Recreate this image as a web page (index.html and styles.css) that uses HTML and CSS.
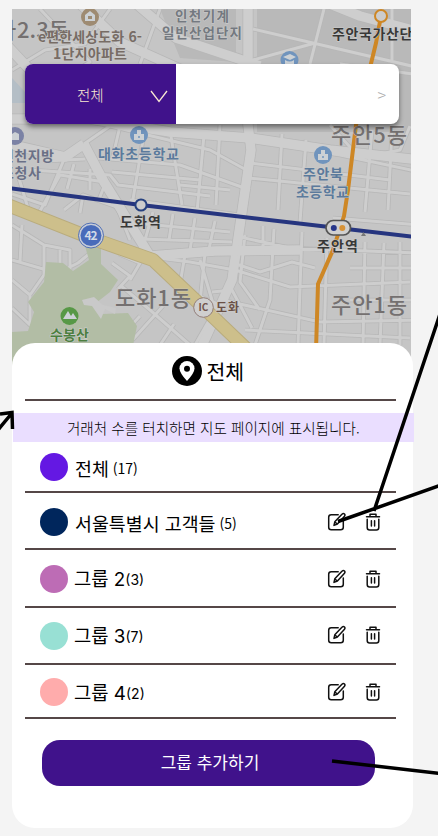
FILE: index.html
```html
<!DOCTYPE html>
<html lang="ko">
<head>
<meta charset="utf-8">
<title>전체</title>
<link rel="stylesheet" href="styles.css">
</head>
<body>
<svg class="defs" width="0" height="0" aria-hidden="true">
  <defs>
    <symbol id="edit" viewBox="0 0 20 20">
      <path d="M11.2 2.8H4.2Q1.7 2.8 1.7 5.3V15.2Q1.7 17.7 4.2 17.7H13.7Q16.3 17.7 16.3 15.2V9" />
      <path d="M7 13.4L7.8 9.8L14.9 2.3Q16.4 1 17.5 2Q18.5 3.1 17.3 4.6L10.4 12Z M8 10L10.2 12" />
    </symbol>
    <symbol id="trash" viewBox="0 0 16 20">
      <path d="M1.5 4.8H14.5M5 4.5V2.2H11V4.5M2.2 7.3V15.5Q2.2 18 4.6 18H11.4Q13.8 18 13.8 15.5V7.3M6.4 8.8V14M9.6 8.8V14" />
    </symbol>
  </defs>
</svg>
<main class="phone">
  <svg class="map" viewBox="12 9 399 360" aria-hidden="true">
    <defs>
      <g id="wide">
        <path d="M248 0V125L251 150L232 280L200 350L190 380" />
        <path d="M76 0L120 42L200 78M0 38L62 104M132 0L176 38L260 66" />
        <path d="M0 119H90L170 132L250 138L330 150L420 160" />
        <path d="M84 144L104 182L150 256M150 256L215 251L300 250M84 144L65 157L0 142" />
        <path d="M320 0L360 16L420 32" />
      </g>
      <g id="medium">
        <path d="M12 70L45 50L85 44L110 9M40 9L90 62L60 80M12 54L60 100M160 9L140 64" />
        <path d="M253 29L420 68M324 9L310 64M253 60L315 43M392 60V9M340 64L420 75" />
        <path d="M84 144L110 126L210 150L250 172M98 158L180 165L250 190M65 157L45 205L12 194M104 182L60 175L35 220" />
        <path d="M120 126L112 160M145 128L132 205M170 130L182 205M204 135L197 212M220 125L216 205M112 172L200 180M130 200L240 215" />
        <path d="M250 140L340 155L420 172M248 178L410 194M250 163L390 180M282 134L278 210M306 140L300 222M372 130L365 212M392 130L388 210M330 125L360 158L400 150L410 126" />
        <path d="M235 236L290 248L420 253M235 270L290 287L410 282M222 300L320 322L420 320M245 330L410 338M245 235L240 282L260 310M274 229L270 300L255 345M302 232L298 345M327 238L324 345M365 242L363 345M384 243L380 345M400 242V345M230 262L260 272L292 262L315 268M212 292L232 290L252 328M263 226V250M350 300H411M350 268H411M333 218L420 225" />
        <path d="M12 225L44 245V275L30 295L12 280M44 245L70 250V270M60 250V272L78 263L89 254M12 260L43 269M22 225L20 262M30 296V325L12 308M64 210L83 195L80 213M83 195L120 208" />
        <path d="M119 254L140 263L130 280M112 263L130 276L118 289M150 257L190 262L235 270M120 285L150 310L190 345M163 306L128 345M180 288L220 305M185 255L180 284M205 253L200 302M174 324L160 345M140 316L128 329M200 260L215 310L195 345" />
        <path d="M117 207L130 240M153 212L145 240M173 214L169 240M195 218L190 250M215 221L209 249M145 224L230 232M140 239L232 242" />
        <path d="M18 175L30 215M30 170L110 175L118 185L210 196M46 161L85 159M74 164L67 189M90 169V190M105 184L98 202M180 185L230 190" />
      </g>
    </defs>
    <rect class="land" x="12" y="9" width="399" height="360" />
    <path class="dark-block" d="M160 9H236V62L180 58ZM257 9H411V132H257Z" />
    <path class="water" d="M12 78L25 92L34 103H12Z" />
    <g class="casing"><use class="w-medium" href="#medium"/><use class="w-wide" href="#wide"/></g>
    <g class="road"><use class="w-medium" href="#medium"/><use class="w-wide" href="#wide"/></g>
    <path class="park" d="M85 246L101 248V264L118 280L110 292L96 303L102 314L128 313L137 326L132 350L110 369H12V332L28 331L34 312L28 302L44 282L46 262L63 263L73 271L89 260Z" />
    <path class="park-path" d="M115 314L105 309L101 319L92 306L84 305L82 300L94 297L103 305L116 308Z" />
    <path class="highway-edge" d="M5 204L96 240L153 260L209 313L255 357" />
    <path class="highway" d="M5 204L96 240L153 260L209 313L255 357" />
    <path class="metro-orange" d="M381 16L376 43L356 125L348 190L344 216L333 250L318 284L316 350" />
    <path class="metro-blue" d="M8 188L141 205L338 228L415 237" />
    <circle class="stop-blue" cx="141" cy="205" r="5.6" />
    <circle class="stop-orange" cx="381" cy="16" r="6" />
    <rect class="transfer" x="326" y="220.5" width="24.5" height="14.5" rx="7.2" />
    <circle cx="333.8" cy="228" r="3" fill="#27368a" /><circle cx="342.3" cy="228" r="3" fill="#d69238" />
    <g class="marker-brown"><circle cx="90" cy="17" r="9"/><path d="M85 20V15L90 11L95 15V21H85Z M88 16H92V19H88Z"/></g>
    <g class="marker-navy"><circle cx="15" cy="136" r="9"/><path d="M12 134L15 132L19 134V140H12Z"/></g>
    <g class="marker-blue"><circle cx="139" cy="135" r="9"/><path d="M134 140V134H137V130H141V134H144V140Z"/><circle cx="139" cy="137" r="1"/></g>
    <g class="marker-blue"><circle cx="323" cy="155" r="9"/><path d="M318 160V154H321V150H325V154H328V160Z"/><circle cx="323" cy="157" r="1"/></g>
    <g class="marker-blue"><circle cx="289.5" cy="60" r="9"/><path d="M283 57L290 54L296 57L290 60ZM285 60Q290 63 294 60V64H285Z"/></g>
    <g class="marker-green"><circle cx="69.5" cy="316" r="9"/><path d="M63 319L68 311L71 316L73 313L77 319Z"/></g>
    <circle class="route-ring" cx="91" cy="235.5" r="12.5" /><circle class="route" cx="91" cy="235.5" r="10.5" />
    <text class="route-label" x="91" y="240" textLength="13">42</text>
    <circle class="ic" cx="203.5" cy="307.5" r="9.8" /><text class="ic-label" x="203.5" y="311.3">IC</text>
    <g class="label">
      <text class="district" x="-4" y="38">가</text>
      <text class="district" x="17" y="38" textLength="52">2.3동</text>
      <text class="brown" x="38" y="41.5" textLength="104">e편한세상도화 6-</text>
      <text class="brown" x="53" y="58.5" textLength="74">1단지아파트</text>
      <text class="slate" x="175" y="21" textLength="54">인천기계</text>
      <text class="slate" x="162" y="38" textLength="80">일반산업단지</text>
      <text class="station" x="332" y="38.5" textLength="94">주안국가산단역</text>
      <text class="district" x="331" y="143" textLength="76">주안5동</text>
      <text class="school" x="98" y="159" textLength="81">대화초등학교</text>
      <text class="school" x="303" y="179" textLength="40">주안북</text>
      <text class="school" x="296" y="197" textLength="53">초등학교</text>
      <text class="office" x="1" y="161" textLength="53">인천지방</text>
      <text class="office" x="1" y="178" textLength="40">조청사</text>
      <text class="station" x="120" y="227" textLength="41">도화역</text>
      <text class="station" x="317" y="251" textLength="41">주안역</text>
      <text class="district" x="115" y="306" textLength="76">도화1동</text>
      <text class="district" x="331" y="313" textLength="76">주안1동</text>
      <text class="exit" x="216" y="312" textLength="23">도화</text>
      <text class="hill" x="50" y="340" textLength="39">수봉산</text>
    </g>
    <path d="M361 236L363.5 232L366 236Z" fill="#777" />
  </svg>

  <div class="picker">
    <button class="picker-group"><span>전체</span>
      <svg width="18" height="13" viewBox="0 0 18 13"><path d="M1 1L9 11.5L17 1"/></svg>
    </button>
    <div class="picker-value"><span>&gt;</span></div>
  </div>

  <section class="sheet">
    <header class="sheet-title">
      <svg width="30" height="30" viewBox="0 0 30 30"><circle cx="15" cy="15" r="15"/><path d="M15 25Q7.5 17 7.5 12.3A7.5 7.3 0 0 1 22.5 12.3Q22.5 17 15 25Z" fill="#fff"/><circle cx="15" cy="12.7" r="3"/></svg>
      <h1>전체</h1>
    </header>
    <p class="notice"><span>거래처 수를 터치하면 지도 페이지에 표시됩니다.</span></p>
    <ul class="groups">
      <li class="group all"><i class="dot violet"></i><b>전체</b><small>(17)</small></li>
      <li class="group seoul"><i class="dot navy"></i><b>서울특별시 고객들</b><small>(5)</small><span class="actions"><svg class="edit"><use href="#edit"/></svg><svg class="trash"><use href="#trash"/></svg></span></li>
      <li class="group numbered second"><i class="dot orchid"></i><b>그룹 2</b><small>(3)</small><span class="actions"><svg class="edit"><use href="#edit"/></svg><svg class="trash"><use href="#trash"/></svg></span></li>
      <li class="group numbered third"><i class="dot mint"></i><b>그룹 3</b><small>(7)</small><span class="actions"><svg class="edit"><use href="#edit"/></svg><svg class="trash"><use href="#trash"/></svg></span></li>
      <li class="group numbered fourth"><i class="dot pink"></i><b>그룹 4</b><small>(2)</small><span class="actions"><svg class="edit"><use href="#edit"/></svg><svg class="trash"><use href="#trash"/></svg></span></li>
    </ul>
    <button class="add">그룹 추가하기</button>
  </section>
</main>
<svg class="connectors" viewBox="0 0 438 836" aria-hidden="true">
  <path d="M440 314L374 511M440 485.5L338 521.5M332 761L440 773.5"/>
  <path d="M-3 431L12 413M0 414L12 412.5L12.5 429"/>
</svg>
</body>
</html>
```
FILE: styles.css
```css
* { box-sizing: border-box; }
body {
  position: relative;
  width: 438px;
  height: 836px;
  margin: 0;
  padding: 9px 0 0 12px;
  overflow: hidden;
  background: #f4f4f4;
  color: #000;
  font-family: "Noto Sans CJK KR", sans-serif;
}
.defs { position: absolute; }
.phone { position: relative; width: 401px; }
.map { display: block; width: 399px; height: 360px; }
.map path { stroke-linejoin: round; }
.land { fill: #c5c5c5; }
.dark-block { fill: #b9b9b9; }
.water { fill: #b4bec6; }
.casing, .road { fill: none; }
.casing { stroke: #b7b7b7; }
.road { stroke: #cecece; }
.casing .w-medium { stroke-width: 4.6px; }
.casing .w-wide { stroke-width: 11px; }
.road .w-medium { stroke-width: 3px; }
.road .w-wide { stroke-width: 9.5px; }
.park { fill: #b2bda5; }
.park-path { fill: #c9c9c9; }
.highway-edge, .highway, .metro-orange, .metro-blue { fill: none; }
.highway-edge { stroke: #b9ac7d; stroke-width: 14px; }
.highway { stroke: #cdbf8b; stroke-width: 12px; }
.metro-orange { stroke: #ce8725; stroke-width: 4px; }
.metro-blue { stroke: #26357f; stroke-width: 4px; }
.stop-blue { fill: #ccc; stroke: #26417f; stroke-width: 2px; }
.stop-orange { fill: #ccc; stroke: #ce8725; stroke-width: 2px; }
.transfer { fill: #d0d0d0; stroke: #555; stroke-width: 1.7px; }
.marker-brown { fill: #9e8b72; }
.marker-navy { fill: #7b82a5; }
.marker-blue { fill: #7094bd; }
.marker-green { fill: #579846; }
.map g[class^="marker"] path { fill: #ccd1d5; fill-rule: evenodd; }
.route-ring { fill: #c8cdd8; stroke: #5371b4; }
.route { fill: #486bba; }
.route-label, .ic-label { font-weight: 700; text-anchor: middle; }
.route-label { fill: #d2d9e6; font-size: 12px; }
.ic { fill: #cfcfcf; stroke: #927e79; }
.ic-label { fill: #71564d; font-size: 10px; }
.label { font-size: 14px; font-weight: 500; paint-order: stroke; stroke: #cbcbcb; stroke-width: 1.2px; }
.district { fill: #747070; font-size: 22px; font-weight: 500; stroke-width: 0.6px; }
.brown { fill: #776c65; font-weight: 700; }
.slate { fill: #747980; font-size: 13.5px; font-weight: 700; }
.station { fill: #383838; font-weight: 700; }
.school { fill: #5b7a9c; font-weight: 700; }
.office { fill: #6a7086; font-weight: 700; }
.exit { fill: #6b5146; font-size: 12px; font-weight: 700; }
.hill { fill: #4c7f3f; font-weight: 700; }
.picker {
  position: absolute;
  top: 55px;
  left: 13px;
  display: flex;
  width: 374px;
  height: 60px;
  border-radius: 8px;
  background: #fff;
  box-shadow: 0 3px 5px rgb(0 0 0 / 45%);
}
button { border: 0; font-family: inherit; }
.picker-group {
  display: flex;
  align-items: center;
  justify-content: space-between;
  width: 151px;
  padding: 1px 8px 0 52px;
  border-radius: 8px 0 0 8px;
  background: #40128b;
  color: #f8e9d2;
  font-size: 14.5px;
  font-weight: 300;
}
.picker-group svg { margin-top: 3px; fill: none; stroke: #f8e9d2; stroke-width: 1.3px; }
.picker-value {
  display: flex;
  flex: 1;
  align-items: center;
  justify-content: flex-end;
  padding-right: 13px;
  color: #aaa;
  font-size: 16px;
  font-weight: 300;
}
.sheet {
  position: relative;
  display: flex;
  flex-direction: column;
  width: 400.5px;
  height: 485px;
  margin-top: -26px;
  border-radius: 23px;
  background: #fff;
}
.sheet-title {
  display: flex;
  align-items: center;
  justify-content: center;
  gap: 4px;
  height: 58px;
  margin: 0 17px 0 13px;
  padding-right: 4px;
  padding-bottom: 1px;
  border-bottom: 2px solid #554747;
}
h1 { margin: 0; font-size: 20.5px; font-weight: 400; line-height: 30px; }
.notice {
  height: 29px;
  margin: 12px -1px 0 1px;
  background: #eadeff;
  font-size: 14.6px;
  font-weight: 300;
  line-height: 29px;
  text-align: center;
  white-space: nowrap;
}
.groups { margin: 0 17px 0 13px; padding: 0; list-style: none; }
.group {
  display: flex;
  align-items: center;
  padding-left: 15px;
  border-bottom: 2px solid #554747;
  white-space: nowrap;
}
.all { height: 51px; }
.seoul { height: 57px; padding-top: 2px; }
.second { height: 58px; padding-top: 1px; }
.third { height: 57px; }
.fourth { height: 54px; padding-top: 2px; }
.dot { flex: none; width: 28px; height: 28px; border-radius: 50%; }
.violet { background: #6418e3; }
.navy { background: #00265c; }
.orchid { background: #bd6cb5; }
.mint { background: #98e0d4; }
.pink { background: #ffacac; }
.group b { margin-left: 7px; padding-top: 2px; font-size: 18.4px; font-weight: 400; line-height: 28px; }
.group small { margin-left: 4px; padding-top: 3px; font-size: 14px; font-weight: 400; line-height: 20px; }
.numbered b, .numbered small { font-family: Inter, "Noto Sans CJK KR", sans-serif; }
.numbered b { margin-left: 6px; padding-top: 3px; font-size: 18.8px; }
.numbered small { margin-left: 0; }
.actions { display: flex; gap: 18px; margin-left: auto; padding-right: 15px; }
.actions svg { fill: none; stroke: #111; stroke-width: 1.5px; stroke-linecap: round; stroke-linejoin: round; }
.third .actions { margin-top: -2px; }
.edit { width: 20px; height: 20px; }
.trash { width: 16px; height: 20px; }
.add {
  width: 333px;
  height: 46px;
  margin: 21px 0 0 30px;
  padding: 0 4px 3px 7px;
  border-radius: 18px;
  background: #40128b;
  color: #fff;
  font-size: 17px;
  font-weight: 400;
}
.connectors {
  position: absolute;
  inset: 0;
  width: 438px;
  height: 836px;
  fill: none;
  stroke: #000;
  stroke-width: 3.5px;
  pointer-events: none;
}
```
